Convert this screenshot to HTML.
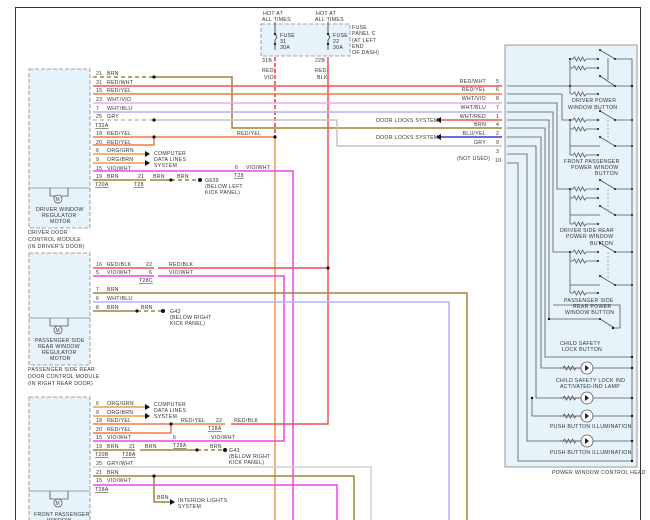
<!DOCTYPE html>
<html><head><meta charset="utf-8">
<style>
html,body{margin:0;padding:0;background:#fff;}
svg{display:block;}
text{font-family:"Liberation Sans",sans-serif;font-size:5.2px;fill:#333;letter-spacing:0.3px;}
.u{text-decoration:underline;}
</style></head><body>
<svg width="650" height="520" viewBox="0 0 650 520" xmlns="http://www.w3.org/2000/svg">
<rect width="650" height="520" fill="#fff"/>
<!-- frame -->
<path d="M15.5 520 V7.5 H640.5 V520" fill="none" stroke="#333" stroke-width="1"/>

<!-- fuse box -->
<rect x="261" y="24" width="89" height="32" fill="#e6f3fb" stroke="#888" stroke-dasharray="4,2" stroke-width="0.8"/>
<text x="263" y="15">HOT AT</text><text x="262" y="21">ALL TIMES</text>
<text x="316" y="15">HOT AT</text><text x="315" y="21">ALL TIMES</text>
<g stroke="#333" stroke-width="0.8" fill="none">
<path d="M275 22 V34 q3 3 0 6 V50"/><path d="M328 22 V34 q3 3 0 6 V50"/>
</g>
<circle cx="275" cy="34" r="1.2" fill="#222"/><circle cx="275" cy="44" r="1.2" fill="#222"/>
<circle cx="328" cy="34" r="1.2" fill="#222"/><circle cx="328" cy="44" r="1.2" fill="#222"/>
<text x="280" y="37">FUSE</text><text x="280" y="43">31</text><text x="280" y="49">30A</text>
<text x="333" y="37">FUSE</text><text x="333" y="43">22</text><text x="333" y="49">30A</text>
<text x="352" y="29">FUSE</text><text x="352" y="35">PANEL C</text><text x="352" y="42">(AT LEFT</text><text x="352" y="48">END</text><text x="352" y="54">OF DASH)</text>
<text x="262" y="62">31B</text><text x="315" y="62">22B</text>
<text x="262" y="72">RED/</text><text x="264" y="79">VIO</text>
<text x="315" y="72">RED/</text><text x="317" y="79">BLK</text>

<!-- long verticals -->
<path d="M275 57 V137" stroke="#f04848" stroke-width="1.6" stroke-dasharray="4,2"/>
<path d="M275 137 V520" stroke="#f5974a" stroke-width="1.5"/>
<path d="M328 57 V424 H323" fill="none" stroke="#ee5050" stroke-width="1.5"/>
<path d="M93 171 H293 V520" fill="none" stroke="#f040f0" stroke-width="1.5"/>

<!-- driver module -->
<rect x="29" y="69" width="61" height="159" fill="#e6f3fb" stroke="#888" stroke-dasharray="4,2" stroke-width="0.8"/>
<path d="M29 188 H90" stroke="#888" stroke-width="0.8"/>
<path d="M50 188 v8 h18 v-8" fill="none" stroke="#555" stroke-width="0.8"/>
<circle cx="58" cy="199" r="4" fill="#fff" stroke="#555" stroke-width="0.8"/><text x="55.5" y="201" style="font-size:5px">M</text>
<text x="36" y="211">DRIVER WINDOW</text><text x="42" y="217">REGULATOR</text><text x="50" y="223">MOTOR</text>
<text x="28" y="234">DRIVER DOOR</text><text x="28" y="241">CONTROL MODULE</text><text x="28" y="248">(IN DRIVER'S DOOR)</text>

<!-- driver wires -->
<g fill="none" stroke-width="1.5">
<path d="M93 77 H154" stroke="#a0843c" stroke-dasharray="4,3"/>
<path d="M154 77 H232 V128 H502" stroke="#a0843c"/>
<path d="M93 86 H502" stroke="#f05050"/>
<path d="M93 94 H502" stroke="#f37a44"/>
<path d="M93 103 H502" stroke="#f2a6f2"/>
<path d="M93 112 H502" stroke="#b4b4f4"/>
<path d="M93 120 H154" stroke="#bbb" stroke-dasharray="4,3"/>
<path d="M154 120 H337 V146 H502" stroke="#c4c4c4"/>
<path d="M93 137 H275" stroke="#f37a44"/>
<path d="M93 145 H154 V137" stroke="#f37a44"/>
<path d="M93 154 H145" stroke="#e8a040"/>
<path d="M93 163 H145" stroke="#e8a040"/>
<path d="M93 180 H146" stroke="#a0843c"/>
<path d="M150 180 H171" stroke="#a0843c"/>
<path d="M171 180 H200" stroke="#a0843c" stroke-dasharray="4,3"/>
<path d="M440 120 H502" stroke="#f05050"/>
<path d="M440 137 H502" stroke="#3a3ae0"/>
</g>
<g fill="#111"><circle cx="154" cy="77" r="1.6"/><circle cx="154" cy="120" r="1.6"/><circle cx="154" cy="137" r="1.6"/><circle cx="275" cy="137" r="1.6"/><circle cx="171" cy="180" r="1.6"/><circle cx="200" cy="180" r="2"/>
<path d="M145 151 l5 3 l-5 3z"/><path d="M145 160 l5 3 l-5 3z"/>
<path d="M436 120 l5 -3 v6z"/><path d="M436 137 l5 -3 v6z"/></g>
<text x="96" y="75">21</text><text x="107" y="75">BRN</text>
<text x="96" y="84">31</text><text x="107" y="84">RED/WHT</text>
<text x="96" y="92">15</text><text x="107" y="92">RED/YEL</text>
<text x="96" y="101">23</text><text x="107" y="101">WHT/VIO</text>
<text x="96" y="110">7</text><text x="107" y="110">WHT/BLU</text>
<text x="96" y="118">25</text><text x="107" y="118">GRY</text>
<text x="95" y="127" class="u">T32A</text>
<text x="96" y="135">18</text><text x="107" y="135">RED/YEL</text>
<text x="96" y="144">20</text><text x="107" y="144">RED/YEL</text>
<text x="96" y="152">6</text><text x="107" y="152">ORG/GRN</text>
<text x="96" y="161">9</text><text x="107" y="161">ORG/BRN</text>
<text x="96" y="170">15</text><text x="107" y="170">VIO/WHT</text>
<text x="96" y="178">19</text><text x="107" y="178">BRN</text>
<text x="95" y="186" class="u">T20A</text>
<text x="138" y="178">21</text><text x="134" y="186" class="u">T28</text>
<text x="153" y="178">BRN</text><text x="177" y="178">BRN</text>
<text x="154" y="155">COMPUTER</text><text x="154" y="161">DATA LINES</text><text x="154" y="167">SYSTEM</text>
<text x="205" y="182">G639</text><text x="205" y="188">(BELOW LEFT</text><text x="205" y="194">KICK PANEL)</text>
<text x="235" y="169">6</text><text x="246" y="169">VIO/WHT</text><text x="234" y="177" class="u">T28</text>
<text x="237" y="135">RED/YEL</text>

<!-- right labels -->
<g text-anchor="end">
<text x="486" y="83">RED/WHT</text><text x="486" y="91">RED/YEL</text><text x="486" y="100">WHT/VIO</text><text x="486" y="109">WHT/BLU</text>
<text x="486" y="118">WHT/RED</text><text x="486" y="126">BRN</text><text x="486" y="135">BLU/YEL</text><text x="486" y="144">GRY</text>
</g>
<text x="376" y="122">DOOR LOCKS SYSTEM</text><text x="376" y="139">DOOR LOCKS SYSTEM</text>
<text x="457" y="160">(NOT USED)</text>
<g><text x="496" y="83">5</text><text x="496" y="91">6</text><text x="496" y="100">8</text><text x="496" y="109">7</text><text x="496" y="118">1</text><text x="496" y="126">4</text><text x="496" y="135">2</text><text x="496" y="144">9</text><text x="496" y="153">3</text><text x="495" y="162">10</text></g>

<!-- control head -->
<rect x="505" y="45" width="132" height="422" fill="#e6f3fb" stroke="#999" stroke-width="1"/>
<text x="552" y="474">POWER WINDOW CONTROL HEAD</text>
<g fill="none" stroke="#555" stroke-width="0.8">
<path d="M507 86 H632"/>
<path d="M507 94 H562 V120 H570"/>
<path d="M507 103 H557 V189 H570"/>
<path d="M507 112 H553 V252 H570"/>
<path d="M507 120 H549 V319 H600"/>
<path d="M507 128 H545 V357 H632"/>
<path d="M507 137 H541 V368 H632"/>
<path d="M507 146 H536 V398 H632"/>
<path d="M507 154 H527 V441 H632"/>
<path d="M507 163 H518 V461 H632"/>
<path d="M532 398 V416 H632"/>
<path d="M632 59 V461"/>
<path d="M549 319 V319"/>
<path d="M553 305 H620 V328 H613"/>
</g>
<g fill="#111" stroke="none">
<circle cx="632" cy="86" r="1.2"/><circle cx="632" cy="357" r="1.2"/><circle cx="632" cy="368" r="1.2"/><circle cx="632" cy="398" r="1.2"/><circle cx="632" cy="416" r="1.2"/><circle cx="632" cy="441" r="1.2"/><circle cx="632" cy="461" r="1.2"/>
<circle cx="549" cy="319" r="1.2"/><circle cx="532" cy="398" r="1.2"/><circle cx="613" cy="328" r="1.2"/>
</g>
<!-- switch groups -->
<g id="sw" fill="none" stroke="#555" stroke-width="0.8">
</g>
<g fill="none" stroke="#555" stroke-width="0.8">
<path d="M570 59 V94 M570 59 h3 l1.5 -2 l2 4 l2 -4 l2 4 l2 -4 l2 4 l1.5 -2 h11 M570 68 h3 l1.5 -2 l2 4 l2 -4 l2 4 l2 -4 l2 4 l1.5 -2 h11 M570 94 h3 l1.5 -2 l2 4 l2 -4 l2 4 l2 -4 l2 4 l1.5 -2 h11 M600 50 L615 59 H632 M600 76 L615 86 M608 58 V80" />
<path d="M570 120 V155 M570 120 h3 l1.5 -2 l2 4 l2 -4 l2 4 l2 -4 l2 4 l1.5 -2 h11 M570 129 h3 l1.5 -2 l2 4 l2 -4 l2 4 l2 -4 l2 4 l1.5 -2 h11 M570 146 H600 M570 155 h3 l1.5 -2 l2 4 l2 -4 l2 4 l2 -4 l2 4 l1.5 -2 h11 M600 111 L615 120 H632 M600 137 L615 146 H632" />
<path d="M570 189 V224 M570 189 h3 l1.5 -2 l2 4 l2 -4 l2 4 l2 -4 l2 4 l1.5 -2 h11 M570 198 h3 l1.5 -2 l2 4 l2 -4 l2 4 l2 -4 l2 4 l1.5 -2 h11 M570 215 H600 M570 224 h3 l1.5 -2 l2 4 l2 -4 l2 4 l2 -4 l2 4 l1.5 -2 h11 M600 180 L615 189 H632 M600 206 L615 215 H632" />
<path d="M570 252 V293 M570 252 h3 l1.5 -2 l2 4 l2 -4 l2 4 l2 -4 l2 4 l1.5 -2 h11 M570 261 h3 l1.5 -2 l2 4 l2 -4 l2 4 l2 -4 l2 4 l1.5 -2 h11 M570 285 H600 M570 293 h3 l1.5 -2 l2 4 l2 -4 l2 4 l2 -4 l2 4 l1.5 -2 h11 M600 243 L615 252 H632 M600 276 L615 285 H632" />
<path d="M600 319 L613 327" />
<path d="M560 368 h3 l1.5 -2 l2 4 l2 -4 l2 4 l2 -4 l2 4 l1.5 -2 h6 M560 398 h3 l1.5 -2 l2 4 l2 -4 l2 4 l2 -4 l2 4 l1.5 -2 h6 M560 416 h3 l1.5 -2 l2 4 l2 -4 l2 4 l2 -4 l2 4 l1.5 -2 h6 M560 441 h3 l1.5 -2 l2 4 l2 -4 l2 4 l2 -4 l2 4 l1.5 -2 h6" />
</g>
<g stroke="#888" stroke-width="0.6" stroke-dasharray="2,2"><path d="M608 58 V80 M608 120 V142 M608 189 V211 M608 252 V280"/></g>
<g fill="#fff" stroke="#555" stroke-width="0.8">
<circle cx="587" cy="368" r="6"/><circle cx="587" cy="398" r="6"/><circle cx="587" cy="416" r="6"/><circle cx="587" cy="441" r="6"/>
</g>
<g fill="#222"><path d="M585 365 l4 3 l-4 3z"/><path d="M585 395 l4 3 l-4 3z"/><path d="M585 413 l4 3 l-4 3z"/><path d="M585 438 l4 3 l-4 3z"/></g>
<g fill="#111">
<circle cx="570" cy="59" r="1"/><circle cx="570" cy="86" r="1"/><circle cx="598" cy="59" r="1"/><circle cx="598" cy="68" r="1"/><circle cx="598" cy="94" r="1"/><circle cx="615" cy="59" r="1"/><circle cx="615" cy="86" r="1"/><circle cx="600" cy="50" r="1"/><circle cx="600" cy="76" r="1"/>
<circle cx="570" cy="120" r="1"/><circle cx="598" cy="120" r="1"/><circle cx="598" cy="129" r="1"/><circle cx="598" cy="155" r="1"/><circle cx="615" cy="120" r="1"/><circle cx="615" cy="146" r="1"/><circle cx="600" cy="111" r="1"/><circle cx="600" cy="137" r="1"/><circle cx="632" cy="120" r="1"/><circle cx="632" cy="146" r="1"/>
<circle cx="570" cy="189" r="1"/><circle cx="598" cy="189" r="1"/><circle cx="598" cy="198" r="1"/><circle cx="598" cy="224" r="1"/><circle cx="615" cy="189" r="1"/><circle cx="615" cy="215" r="1"/><circle cx="600" cy="180" r="1"/><circle cx="600" cy="206" r="1"/><circle cx="632" cy="189" r="1"/><circle cx="632" cy="215" r="1"/>
<circle cx="570" cy="252" r="1"/><circle cx="598" cy="252" r="1"/><circle cx="598" cy="261" r="1"/><circle cx="598" cy="293" r="1"/><circle cx="615" cy="252" r="1"/><circle cx="615" cy="285" r="1"/><circle cx="600" cy="243" r="1"/><circle cx="600" cy="276" r="1"/><circle cx="632" cy="252" r="1"/><circle cx="632" cy="285" r="1"/>
<circle cx="600" cy="319" r="1"/>
</g>
<text x="572" y="102">DRIVER POWER</text><text x="568" y="109">WINDOW BUTTON</text>
<text x="564" y="163">FRONT PASSENGER</text><text x="571" y="169">POWER WINDOW</text><text x="595" y="175">BUTTON</text>
<text x="560" y="232">DRIVER SIDE REAR</text><text x="566" y="238">POWER WINDOW</text><text x="590" y="245">BUTTON</text>
<text x="564" y="302">PASSENGER SIDE</text><text x="573" y="308">REAR POWER</text><text x="565" y="314">WINDOW BUTTON</text>
<text x="560" y="345">CHILD SAFETY</text><text x="562" y="351">LOCK BUTTON</text>
<text x="556" y="382">CHILD SAFETY LOCK IND</text><text x="560" y="388">ACTIVATED-IND LAMP</text>
<text x="550" y="428">PUSH BUTTON ILLUMINATION</text>
<text x="550" y="454">PUSH BUTTON ILLUMINATION</text>

<!-- passenger side rear module -->
<rect x="29" y="253" width="61" height="112" fill="#e6f3fb" stroke="#888" stroke-dasharray="4,2" stroke-width="0.8"/>
<path d="M29 318 H90" stroke="#888" stroke-width="0.8"/>
<path d="M50 318 v8 h18 v-8" fill="none" stroke="#555" stroke-width="0.8"/>
<circle cx="58" cy="330" r="4" fill="#fff" stroke="#555" stroke-width="0.8"/><text x="55.5" y="332" style="font-size:5px">M</text>
<text x="35" y="342">PASSENGER SIDE</text><text x="38" y="348">REAR WINDOW</text><text x="42" y="354">REGULATOR</text><text x="50" y="360">MOTOR</text>
<text x="28" y="371">PASSENGER SIDE REAR</text><text x="28" y="378">DOOR CONTROL MODULE</text><text x="28" y="385">(IN RIGHT REAR DOOR)</text>
<g fill="none" stroke-width="1.5">
<path d="M93 268 H154 M158 268 H328" stroke="#ee5050"/>
<path d="M93 276 H154 M158 276 H284 V441 H93" stroke="#f040f0"/>
<path d="M93 293 H467 V520" stroke="#a0843c"/>
<path d="M93 302 H449 V520" stroke="#b4b4f4"/>
<path d="M93 311 H137" stroke="#a0843c"/>
<path d="M137 311 H163" stroke="#a0843c" stroke-dasharray="4,3"/>
</g>
<g fill="#111"><circle cx="137" cy="311" r="1.6"/><circle cx="163" cy="311" r="2"/><circle cx="328" cy="268" r="1.6"/></g>
<text x="96" y="266">16</text><text x="107" y="266">RED/BLK</text><text x="146" y="266">22</text><text x="169" y="266">RED/BLK</text>
<text x="96" y="274">5</text><text x="107" y="274">VIO/WHT</text><text x="149" y="274">6</text><text x="169" y="274">VIO/WHT</text>
<text x="139" y="282" class="u">T28C</text>
<text x="96" y="291">7</text><text x="107" y="291">BRN</text>
<text x="96" y="300">6</text><text x="107" y="300">WHT/BLU</text>
<text x="96" y="309">8</text><text x="107" y="309">BRN</text><text x="141" y="309">BRN</text>
<text x="170" y="313">G43</text><text x="170" y="319">(BELOW RIGHT</text><text x="170" y="325">KICK PANEL)</text>

<!-- front passenger module -->
<rect x="29" y="397" width="61" height="130" fill="#e6f3fb" stroke="#888" stroke-dasharray="4,2" stroke-width="0.8"/>
<path d="M29 491 H90" stroke="#888" stroke-width="0.8"/>
<path d="M50 491 v8 h18 v-8" fill="none" stroke="#555" stroke-width="0.8"/>
<circle cx="58" cy="503" r="4" fill="#fff" stroke="#555" stroke-width="0.8"/><text x="55.5" y="505" style="font-size:5px">M</text>
<text x="34" y="516">FRONT PASSENGER</text><text x="47" y="522">WINDOW</text>
<g fill="none" stroke-width="1.5">
<path d="M93 407 H145 M93 416 H145" stroke="#e8a040"/>
<path d="M93 424 H225" stroke="#f37a44"/>
<path d="M231 424 H323" stroke="#ee5050"/>
<path d="M93 433 H171 V424" stroke="#f37a44"/>
<path d="M93 450 H135 M140 450 H197" stroke="#a0843c"/>
<path d="M197 450 H225" stroke="#a0843c" stroke-dasharray="4,3"/>
<path d="M93 467 H371 V520" stroke="#d0d0d0"/>
<path d="M93 476 H354 V520" stroke="#a0843c"/>
<path d="M154 476 V502 H170" stroke="#a0843c"/>
<path d="M93 485 H337 V520" stroke="#f040f0"/>
</g>
<g fill="#111"><path d="M145 404 l5 3 l-5 3z"/><path d="M145 413 l5 3 l-5 3z"/><path d="M170 499 l5 3 l-5 3z"/>
<circle cx="171" cy="424" r="1.6"/><circle cx="197" cy="450" r="1.6"/><circle cx="225" cy="450" r="2"/><circle cx="154" cy="476" r="1.6"/></g>
<text x="96" y="405">6</text><text x="107" y="405">ORG/GRN</text>
<text x="96" y="414">9</text><text x="107" y="414">ORG/BRN</text>
<text x="96" y="422">18</text><text x="107" y="422">RED/YEL</text>
<text x="96" y="431">20</text><text x="107" y="431">RED/YEL</text>
<text x="96" y="439">15</text><text x="107" y="439">VIO/WHT</text>
<text x="96" y="448">19</text><text x="107" y="448">BRN</text><text x="129" y="448">21</text><text x="145" y="448">BRN</text>
<text x="95" y="456" class="u">T20B</text><text x="122" y="456" class="u">T28A</text>
<text x="96" y="465">25</text><text x="107" y="465">GRY/WHT</text>
<text x="96" y="474">21</text><text x="107" y="474">BRN</text>
<text x="96" y="482">15</text><text x="107" y="482">VIO/WHT</text>
<text x="95" y="491" class="u">T28A</text>
<text x="154" y="406">COMPUTER</text><text x="154" y="412">DATA LINES</text><text x="154" y="418">SYSTEM</text>
<text x="181" y="422">RED/YEL</text><text x="216" y="422">22</text><text x="234" y="422">RED/BLK</text><text x="208" y="430" class="u">T28A</text>
<text x="173" y="439">6</text><text x="173" y="447" class="u">T28A</text><text x="211" y="439">VIO/WHT</text>
<text x="210" y="448">BRN</text>
<text x="229" y="452">G43</text><text x="229" y="458">(BELOW RIGHT</text><text x="229" y="464">KICK PANEL)</text>
<text x="157" y="499">BRN</text><text x="178" y="502">INTERIOR LIGHTS</text><text x="178" y="508">SYSTEM</text>
</svg>
</body></html>
